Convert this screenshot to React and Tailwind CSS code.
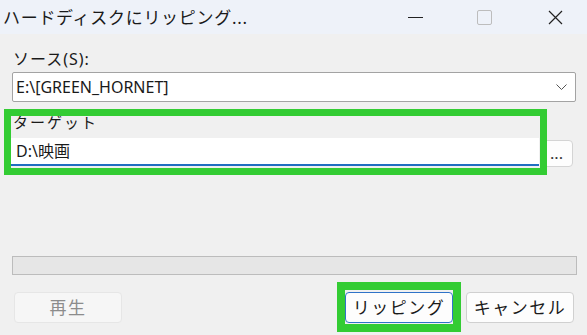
import React from 'react';

const font = "font-['Noto_Sans','Noto_Sans_CJK_JP',sans-serif]";

function TitleBar() {
  return (
    <div className="flex h-[34px] items-center bg-[#eef2f9]">
      <div className="pl-[3px] text-[17px] leading-none text-[#1a1a1a] tracking-[0.7px]">
        ハードディスクにリッピング...
      </div>
      <div className="ml-auto flex items-center pr-[24px]">
        <div className="h-[1px] w-[15px] bg-[#222]" />
        <div className="ml-[54px] h-[15px] w-[15px] rounded-[2px] border border-[#bdbdbd]" />
        <svg className="ml-[56px]" width="15" height="15" viewBox="0 0 15 15">
          <path d="M1 1 L14 14 M14 1 L1 14" stroke="#222" strokeWidth="1.2" fill="none" />
        </svg>
      </div>
    </div>
  );
}

function Button({ children, primary, disabled, className }) {
  return (
    <div
      className={
        'flex h-[31px] w-[108px] items-center justify-center rounded-[4px] text-[17px] tracking-[1.5px] ' +
        (disabled
          ? 'border border-[#e6e6e6] bg-[#f6f6f6] text-[#8c8c8c] '
          : primary
            ? 'border-[1.5px] border-[#2f73c8] bg-[#fdfdfd] text-[#1a1a1a] '
            : 'border border-[#d0d0d0] bg-[#fdfdfd] text-[#1a1a1a] ') +
        (className || '')
      }
    >
      {children}
    </div>
  );
}

export default function App() {
  return (
    <div className={`relative h-[335px] w-[587px] overflow-hidden bg-[#f0f0f0] ${font}`}>
      <TitleBar />

      <div className="px-[12px]">
        <div className="mt-[15px] h-[20px] pl-[1px] text-[16px] leading-[20px] tracking-[1px] text-[#1a1a1a]">
          ソース(S):
        </div>
        <div className="mt-[3px] flex h-[30px] w-[564px] items-center rounded-[2px] border border-[#a3a3a3] bg-white pl-[3px] pr-[8px]">
          <span className="text-[16px] text-[#1a1a1a]">E:\[GREEN_HORNET]</span>
          <svg className="ml-auto" width="11" height="6" viewBox="0 0 11 6">
            <path d="M0.5 0.5 L5.5 5.5 L10.5 0.5" stroke="#555" strokeWidth="1" fill="none" />
          </svg>
        </div>

        <div className="mt-[10px] h-[20px] pl-[1px] text-[15px] leading-[20px] tracking-[2px] text-[#1a1a1a]">
          ターゲット
        </div>
        <div className="mt-[6px] ml-[-1px] flex items-start">
          <div className="flex h-[28px] w-[528px] items-center border-b-2 border-[#1f6fc0] bg-white pl-[5px]">
            <span className="text-[16px] text-[#1a1a1a]">D:\映画</span>
          </div>
          <div className="mt-[2px] ml-[2px] flex h-[27px] w-[32px] items-center justify-center rounded-[4px] border border-[#d4d4d4] bg-[#fdfdfd] pt-[3px] text-[12px] font-bold leading-none tracking-[1px] text-[#333]">
            ...
          </div>
        </div>

        <div className="mt-[89px] h-[19px] w-[565px] border border-[#bcbcbc] bg-[#e6e6e6]" />

        <div className="mt-[17px] flex items-center">
          <Button disabled className="ml-[2px]">再生</Button>
          <Button primary className="ml-auto">リッピング</Button>
          <Button className="ml-[13px] mr-[1px]">キャンセル</Button>
        </div>
      </div>

      <div className="absolute left-[4px] top-[109px] h-[66px] w-[543px] border-[7px] border-[#33cc33]" />
      <div className="absolute left-[337px] top-[282px] h-[50px] w-[124px] border-[8px] border-[#33cc33]" />
    </div>
  );
}
